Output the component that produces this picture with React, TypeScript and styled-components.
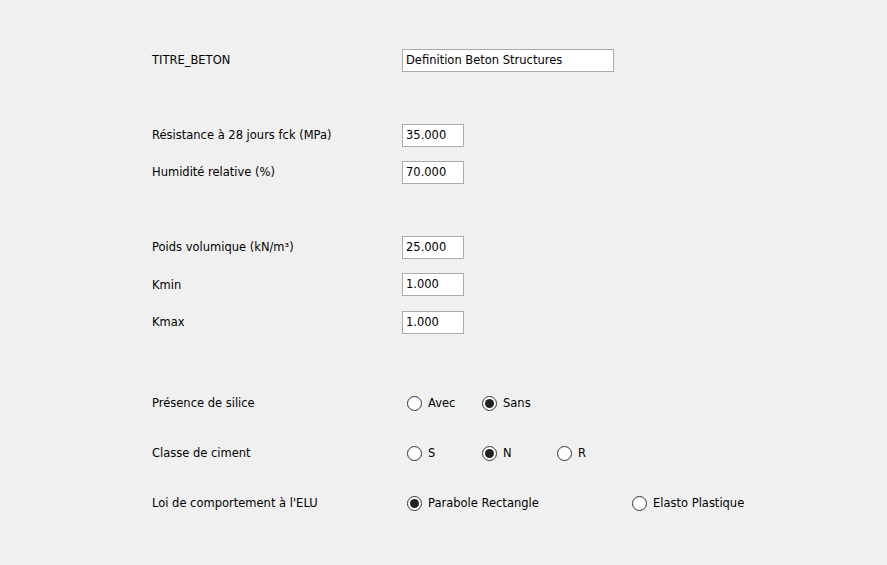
import React, { useState } from 'react';
import styled, { createGlobalStyle } from 'styled-components';

const GlobalStyle = createGlobalStyle`
  html, body {
    margin: 0;
    padding: 0;
    background: #f0f0f0;
  }
  body {
    font-family: "DejaVu Sans", "Liberation Sans", sans-serif;
    font-size: 11.5px;
    color: #000;
  }
`;

// Panneau principal du formulaire béton
const Panel = styled.div`
  display: flex;
  flex-direction: column;
  padding: 48px 0 0 152px;
  width: 887px;
  height: 565px;
  box-sizing: border-box;
`;

const Section = styled.div<{ $gap: number; $top: number }>`
  display: flex;
  flex-direction: column;
  gap: ${p => p.$gap}px;
  margin-top: ${p => p.$top}px;
`;

const Row = styled.div`
  display: grid;
  grid-template-columns: 250px auto;
  align-items: center;
  height: 23px;
  line-height: 24px;
`;

const Label = styled.span`
  white-space: nowrap;
`;

const TextField = styled.input<{ $width: number }>`
  width: ${p => p.$width}px;
  height: 23px;
  box-sizing: border-box;
  border: 1px solid #ababab;
  background: #fff;
  padding: 0 3px 1px;
  font: inherit;
  line-height: normal;
  color: #000;
  outline: none;
`;

const RadioGroup = styled.div`
  display: flex;
  align-items: center;
  padding-left: 5px;
`;

const Option = styled.label<{ $width: number }>`
  display: flex;
  align-items: center;
  gap: 6px;
  width: ${p => p.$width}px;
  cursor: default;
  white-space: nowrap;
`;

const RadioCircle = styled.span<{ $checked: boolean }>`
  width: 15px;
  height: 15px;
  box-sizing: border-box;
  border: 1px solid #333;
  border-radius: 50%;
  background: #fff;
  display: flex;
  align-items: center;
  justify-content: center;

  &::after {
    content: '';
    width: 9px;
    height: 9px;
    border-radius: 50%;
    background: #222;
    display: ${p => (p.$checked ? 'block' : 'none')};
  }
`;

type Choice = { label: string; width: number };

function Radios({ options, value, onChange }: { options: Choice[]; value: string; onChange: (v: string) => void }) {
  return (
    <RadioGroup>
      {options.map(o => (
        <Option key={o.label} $width={o.width} onClick={() => onChange(o.label)}>
          <RadioCircle $checked={value === o.label} />
          <span>{o.label}</span>
        </Option>
      ))}
    </RadioGroup>
  );
}

function App() {
  const [titre, setTitre] = useState('Definition Beton Structures');
  const [silice, setSilice] = useState('Sans');
  const [classe, setClasse] = useState('N');
  const [loi, setLoi] = useState('Parabole Rectangle');

  return (
    <>
      <GlobalStyle />
      <Panel>
        <Section $gap={14} $top={0}>
          <Row>
            <Label>TITRE_BETON</Label>
            <TextField $width={212} value={titre} onChange={e => setTitre(e.target.value)} />
          </Row>
        </Section>

        <Section $gap={14} $top={52}>
          <Row>
            <Label>Résistance à 28 jours fck (MPa)</Label>
            <TextField $width={62} defaultValue="35.000" />
          </Row>
          <Row>
            <Label>Humidité relative (%)</Label>
            <TextField $width={62} defaultValue="70.000" />
          </Row>
        </Section>

        <Section $gap={14.5} $top={52}>
          <Row>
            <Label>Poids volumique (kN/m³)</Label>
            <TextField $width={62} defaultValue="25.000" />
          </Row>
          <Row>
            <Label>Kmin</Label>
            <TextField $width={62} defaultValue="1.000" />
          </Row>
          <Row>
            <Label>Kmax</Label>
            <TextField $width={62} defaultValue="1.000" />
          </Row>
        </Section>

        <Section $gap={27} $top={58}>
          <Row>
            <Label>Présence de silice</Label>
            <Radios
              options={[{ label: 'Avec', width: 75 }, { label: 'Sans', width: 75 }]}
              value={silice}
              onChange={setSilice}
            />
          </Row>
          <Row>
            <Label>Classe de ciment</Label>
            <Radios
              options={[{ label: 'S', width: 75 }, { label: 'N', width: 75 }, { label: 'R', width: 75 }]}
              value={classe}
              onChange={setClasse}
            />
          </Row>
          <Row>
            <Label>Loi de comportement à l'ELU</Label>
            <Radios
              options={[{ label: 'Parabole Rectangle', width: 225 }, { label: 'Elasto Plastique', width: 150 }]}
              value={loi}
              onChange={setLoi}
            />
          </Row>
        </Section>
      </Panel>
    </>
  );
}

export default App;
